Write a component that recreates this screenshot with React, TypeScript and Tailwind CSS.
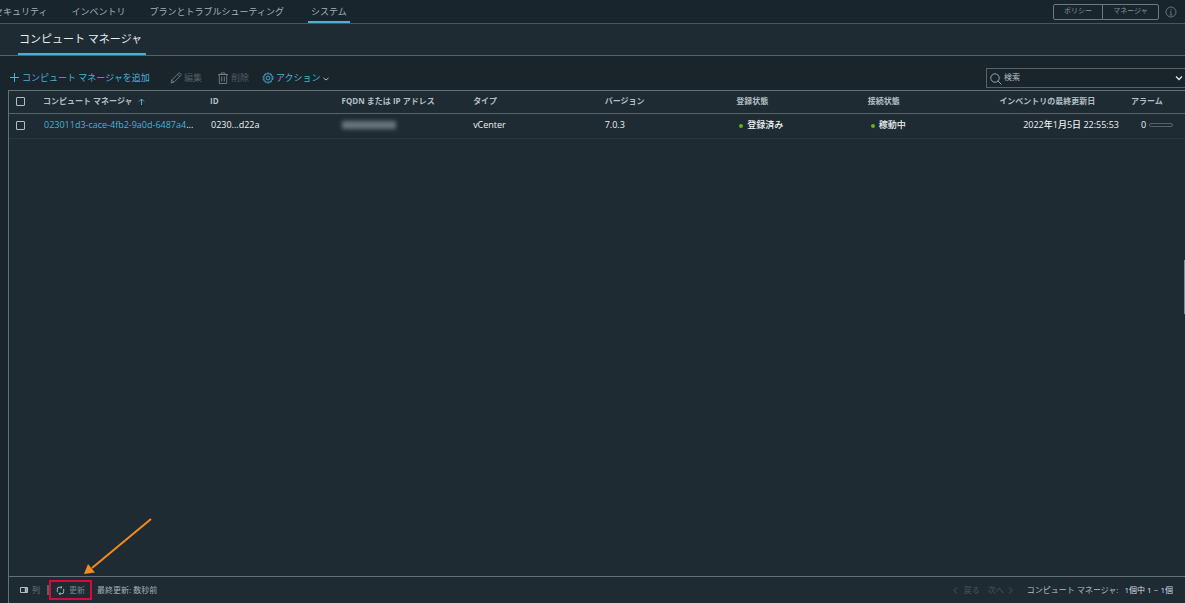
import React from "react";

const columns = [
  { label: "ID" },
  { label: "FQDN または IP アドレス" },
  { label: "タイプ" },
  { label: "バージョン" },
  { label: "登録状態" },
  { label: "接続状態" },
  { label: "インベントリの最終更新日" },
  { label: "アラーム" },
];

const Check = ({ label }: { label: string }) => (
  <input
    type="checkbox"
    aria-label={label}
    className="block ml-[7px] w-[9px] h-[9px] appearance-none border border-[#b4bfc5] rounded-[1px] checked:bg-[#4aaed9]"
  />
);

const Status = ({ text }: { text: string }) => (
  <span className="flex items-center gap-1 pl-[3px]">
    <span className="w-1 h-1 mt-0.5 rounded-full bg-[#60b515]"></span>
    {text}
  </span>
);

const TopNav = () => (
  <header className="flex items-center justify-between shrink-0 h-6 border-b border-[#48565e] bg-[#19252c]">
    <nav className="flex gap-6 h-full -ml-[6px] text-[9px] leading-[23px] text-[#a3b0b7]">
      <a href="#security">セキュリティ</a>
      <a href="#inventory">インベントリ</a>
      <a href="#plan">プランとトラブルシューティング</a>
      <a href="#system" aria-current="page" className="px-[3px] border-b-2 border-[#56aed3]">
        システム
      </a>
    </nav>
    <div className="flex items-center gap-1.5 pr-2 text-[7px] text-[#84929a]">
      <div className="flex h-4 border border-[#6b7980] rounded-[2px]">
        <button type="button" className="w-[49px] border-r border-[#6b7980]">ポリシー</button>
        <button type="button" className="w-[55px]">マネージャ</button>
      </div>
      <button type="button" aria-label="情報">
        <svg className="w-3 h-3" viewBox="0 0 12 12" fill="none" stroke="#6b7980" strokeWidth=".9">
          <circle cx="6" cy="6" r="5" />
          <path d="M6 3v1M5 5.500h1V9M4.700 9h2.600" />
        </svg>
      </button>
    </div>
  </header>
);

const Toolbar = () => (
  <div className="flex items-center justify-between shrink-0 h-[34px] pl-[10px] pt-[9px] text-[9px]">
    <div className="flex items-center">
      <button type="button" className="flex items-center gap-[3px] w-40 text-[#49afd9] whitespace-nowrap">
        <svg className="w-[9px] h-[9px] shrink-0" viewBox="0 0 9 9" stroke="#49afd9">
          <path d="M4.500 0v9M0 4.500h9" />
        </svg>
        コンピュート マネージャを追加
      </button>
      <button type="button" disabled className="flex items-center gap-0.5 w-[47px] text-[#4f5d65]">
        <svg className="w-3 h-3" viewBox="0 0 12 12" fill="none" stroke="#7d8b92" strokeWidth=".8">
          <path d="M1 11l.8-3L8.700 1.100q.6-.5 1.200 0l1 1q.5.6 0 1.200L4 10.200zM7.500 2.300l2.200 2.200M1.800 8L4 10.200" />
        </svg>
        編集
      </button>
      <button type="button" disabled className="flex items-center gap-0.5 w-[45px] text-[#4f5d65]">
        <svg className="w-3 h-3" viewBox="0 0 12 12" fill="none" stroke="#7d8b92" strokeWidth=".8">
          <path d="M1 2.500h10M4.200 2.500V1h3.600v1.500M2.300 2.500v9h7.400v-9M4.700 4.500v5M7.300 4.500v5" />
        </svg>
        削除
      </button>
      <button type="button" className="flex items-center gap-0.5 text-[#49afd9]">
        <svg className="w-3 h-3" viewBox="0 0 12 12" fill="none" stroke="#49afd9">
          <circle cx="6" cy="6" r="5" strokeDasharray="2 1.140" strokeWidth=".9" />
          <circle cx="6" cy="6" r="4.200" strokeWidth=".8" />
          <circle cx="6" cy="6" r="1.900" strokeWidth=".9" />
        </svg>
        <span>アクション</span>
        <svg className="w-[6px] h-[6px] mt-0.5" viewBox="0 0 6 6" fill="none" stroke="#b4bfc5">
          <path d="M.5 2L3 4l2.500-2" />
        </svg>
      </button>
    </div>
    <div className="flex items-center w-[199px] h-5 pl-[3px] border border-r-0 border-[#55646c]">
      <svg className="w-3 h-3 mt-0.5 shrink-0" viewBox="0 0 12 12" fill="none" stroke="#a3b0b7" strokeWidth=".9">
        <circle cx="5" cy="5" r="4.200" />
        <path d="M8 8l3.500 3.500" />
      </svg>
      <input
        type="text"
        aria-label="検索"
        placeholder="検索"
        className="flex-1 min-w-0 h-4 pl-0.5 pb-0.5 text-[8px] text-white bg-transparent outline-none placeholder:text-[#b4bfc5]"
      />
      <button type="button" aria-label="検索オプション" className="pr-0.5">
        <svg className="w-2 h-2" viewBox="0 0 8 8" fill="none" stroke="#e1e8ec" strokeWidth="1.3">
          <path d="M1 2.500L4 5.500l3-3" />
        </svg>
      </button>
    </div>
  </div>
);

const ManagerTable = () => (
  <table className="w-full table-fixed border-separate border-spacing-0 text-left whitespace-nowrap leading-3">
    <colgroup>
      <col className="w-[26px]" />
      <col className="w-[168px]" />
      <col span={7} />
      <col className="w-[61px]" />
    </colgroup>
    <thead>
      <tr className="h-[23px] text-[8px] text-[#b3bfc6] *:border-b *:border-[#55646c] *:pb-0.5">
        <th>
          <Check label="すべて選択" />
        </th>
        <th aria-sort="ascending" className="pl-2 font-bold">
          <span className="flex items-center gap-[5px]">
            コンピュート マネージャ
            <svg className="w-[7px] h-[7px]" viewBox="0 0 7 7" fill="none" stroke="#49afd9">
              <path d="M3.500 7V1M1 3.500L3.500 1 6 3.500" />
            </svg>
          </span>
        </th>
        {columns.map((column) => (
          <th key={column.label} className="pl-[7px] font-bold">
            {column.label}
          </th>
        ))}
      </tr>
    </thead>
    <tbody>
      <tr className="h-[25px] text-[9px] font-medium text-[#eef2f4] *:border-b *:border-[#28363e] *:pb-0.5">
        <td>
          <Check label="行を選択" />
        </td>
        <td className="pl-[9px]">
          <a href="#manager" className="text-[#49afd9]">023011d3-cace-4fb2-9a0d-6487a4</a>...
        </td>
        <td className="pl-2">0230...d22a</td>
        <td className="pl-[7px]">
          {/* Masked address */}
          <div className="w-[54px] h-2 bg-[#69767d] blur-[2px]"></div>
        </td>
        <td className="pl-[7px]">vCenter</td>
        <td className="pl-[7px]">7.0.3</td>
        <td className="pl-[7px]">
          <Status text="登録済み" />
        </td>
        <td className="pl-[7px]">
          <Status text="稼動中" />
        </td>
        <td className="pr-[5px] text-right">2022年1月5日 22:55:53</td>
        <td className="pl-[17px]">
          <span className="flex items-center gap-[3px]">
            0
            <span className="w-6 h-1 border border-[#55646c] rounded-[2px]"></span>
          </span>
        </td>
      </tr>
    </tbody>
  </table>
);

const GridFooter = () => (
  <footer className="flex items-center justify-between shrink-0 h-[27px] pl-[11px] pr-3 border-t border-[#63717a] text-[8px] text-[#a3b0b7]">
    <div className="flex items-center">
      <button type="button" className="flex items-center gap-1 w-[27px] text-[#6c7a82]">
        <svg className="w-2 h-2" viewBox="0 0 8 8" fill="none" stroke="#b4bfc5">
          <path d="M.5 1.500h7v5h-7z" />
          <path d="M5.800 1.500v5" strokeWidth="2" />
        </svg>
        列
      </button>
      <span className="w-0.5 h-[10px] bg-[#55646c]"></span>
      <div className="relative border-2 border-[#d80b34]">
        <button type="button" className="flex items-center gap-1 w-[39px] h-4 pl-[5px] text-[#75838b] whitespace-nowrap">
          <svg className="w-[9px] h-[9px] shrink-0" viewBox="0 0 9 9" fill="none" stroke="#b4bfc5" strokeWidth=".9">
            <path d="M1.300 6.200V3q0-1.700 1.700-1.700h3M4.700 0L6 1.300 4.700 2.600M7.700 2.800V6q0 1.700-1.700 1.700H3M4.300 6.400L3 7.700 4.300 9" />
          </svg>
          更新
        </button>
        {/* Pointer to the refresh button */}
        <svg className="absolute left-8 bottom-[22px] w-[70px] h-[60px] pointer-events-none" viewBox="0 0 70 60">
          <path d="M68 3L9 52" stroke="#f58a1f" strokeWidth="2" />
          <path d="M1 58l4-10 7 8.500z" fill="#f58a1f" />
        </svg>
      </div>
      <span className="pl-[5px]">最終更新: 数秒前</span>
    </div>
    <div className="flex items-center">
      <div className="flex gap-2 pr-[14px] text-[#46545c]">
        <button type="button" disabled className="flex items-center gap-1.5">
          <svg className="w-[5px] h-[7px]" viewBox="0 0 5 7" fill="none" stroke="currentColor">
            <path d="M4 .5l-3 3 3 3" />
          </svg>
          戻る
        </button>
        <button type="button" disabled className="flex items-center gap-1">
          次へ
          <svg className="w-[5px] h-[7px]" viewBox="0 0 5 7" fill="none" stroke="currentColor">
            <path d="M1 .5l3 3-3 3" />
          </svg>
        </button>
      </div>
      <span className="text-[#b3bfc6]">コンピュート マネージャ:</span>
      <span className="pl-[6px] text-[#d3dce1]">1個中 1 ~ 1個</span>
    </div>
  </footer>
);

const App = () => {
  return (
    <div className="relative flex flex-col h-screen overflow-hidden bg-[#19242b] font-['Open_Sans','Noto_Sans_CJK_JP',sans-serif]">
      <TopNav />

      {/* Section title */}
      <div className="flex shrink-0 h-8 pl-[18px] border-b border-[#55646c] bg-[#1e2b32]">
        <h1 className="pl-px pr-1 border-b-2 border-[#49afd9] text-[11px] leading-[29px] text-[#e9eef1]">
          コンピュート マネージャ
        </h1>
      </div>

      <Toolbar />

      {/* Data grid */}
      <main className="flex flex-col flex-1 min-h-0 ml-2 border-l border-t border-[#63717a] bg-[#1e2b32]">
        <div className="flex-1 min-h-0 overflow-hidden">
          <ManagerTable />
        </div>
        <GridFooter />
      </main>

      {/* Page scroll thumb */}
      <div className="absolute right-0 top-[260px] w-px h-[54px] bg-[#7d8b92]"></div>
    </div>
  );
};

export default App;
